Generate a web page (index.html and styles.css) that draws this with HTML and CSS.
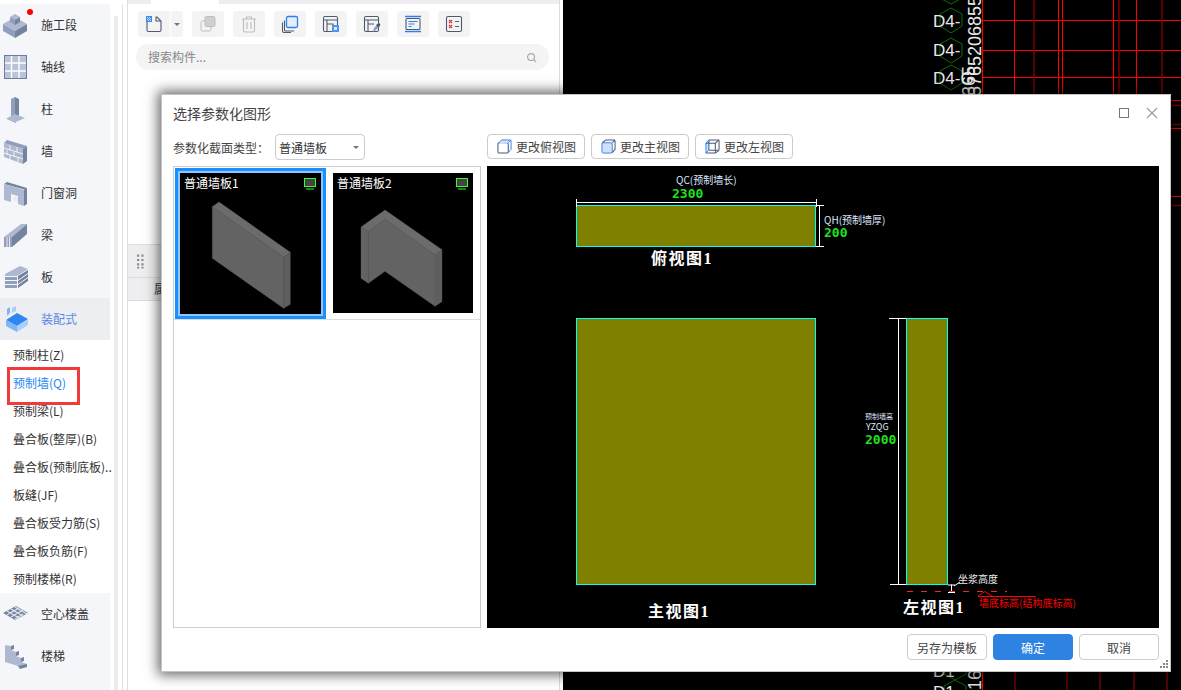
FILE: index.html
```html
<!DOCTYPE html>
<html lang="zh">
<head>
<meta charset="utf-8">
<title>选择参数化图形</title>
<link rel="stylesheet" href="styles.css">
</head>
<body>
<div class="app">
  <aside class="nav">
    <div class="nav-list">
      <div class="nav-item"><svg class="ni" viewBox="0 0 28 28"><polygon class="l" points="2,13 14,6 26,13 14,20"/><polygon class="m" points="2,13 14,20 14,27 2,20"/><polygon class="d" points="14,20 26,13 26,20 14,27"/><polygon class="l" points="9,6 14,3 19,6 14,9"/><polygon class="m" points="9,6 14,9 14,14 9,11"/><polygon class="d" points="14,9 19,6 19,11 14,14"/></svg><span>施工段</span><i class="dot"></i></div>
      <div class="nav-item"><svg class="ni" viewBox="0 0 28 28"><rect x="3.500" y="2.500" width="22" height="23" fill="#b9c3da" stroke="#6f7ca0"/><path d="M10.500 3v22M18 3v22M4 10h21M4 18h21" stroke="#fff" stroke-width="1.400"/></svg><span>轴线</span></div>
      <div class="nav-item"><svg class="ni" viewBox="0 0 28 28"><polygon class="m" points="10,4 14,2 14,22 10,21"/><polygon class="d" points="14,2 18,4 18,21 14,22"/><polygon class="l" points="6,23 14,19 24,23 15,27"/><polygon class="m" points="6,23 15,27 15,28 6,24"/></svg><span>柱</span></div>
      <div class="nav-item"><svg class="ni" viewBox="0 0 28 28"><polygon class="m" points="3,6 6,3 26,9 22,12"/><polygon class="l" points="3,6 22,12 22,27 3,20"/><polygon class="d" points="22,12 26,9 26,24 22,27"/><path d="M3 11l19 6M3 16l19 6M9 8v5M16 10v5M6 13v5M13 15v5M9 18v5M17 20v5" stroke="#fff" stroke-width=".8" fill="none"/></svg><span>墙</span></div>
      <div class="nav-item"><svg class="ni" viewBox="0 0 28 28"><polygon class="d" points="3,5 6,3 26,9 25,11"/><path class="l" d="M3 5l20 6v16l-6-2V17l-7-2v8l-7-2z"/><polygon class="d" points="23,11 26,9 26,25 23,27"/><polygon points="12,17 17,18.500 17,23 12,21" fill="#e8ebf3"/></svg><span>门窗洞</span></div>
      <div class="nav-item"><svg class="ni" viewBox="0 0 28 28"><polygon class="l" points="3,16 20,3 26,3 11,16"/><polygon class="m" points="3,16 11,16 11,26 3,26"/><polygon class="d" points="11,16 26,3 26,13 11,26"/><path d="M6 16v10M8.500 16v10" stroke="#e8ebf3" fill="none"/></svg><span>梁</span></div>
      <div class="nav-item"><svg class="ni" viewBox="0 0 28 28"><polygon class="l" points="4,11 19,3 27,6 16,13 4,13"/><path class="m" d="M4 14h12v3H4zM4 18h12v3H4zM4 22h12v3H4z"/><path class="d" d="M17 13l10-6v3l-10 7zM17 18l10-7v3l-10 7zM17 22l10-7v3l-10 7z"/></svg><span>板</span></div>
      <div class="nav-item active"><svg class="ni" viewBox="0 0 28 28"><polygon points="5,15 16,8 27,14 16,21" fill="#2e86f0"/><polygon points="5,15 16,21 16,27 5,21" fill="#7db6f7"/><polygon points="16,21 27,14 27,20 16,27" fill="#a8cffa"/><polygon points="6,4 9,2 9,8 6,11" fill="#7db6f7"/><polygon points="11,3 15,1 15,6 11,8" fill="#a8cffa"/></svg><span>装配式</span></div>
    </div>
    <ul class="sub-list">
      <li>预制柱(Z)</li>
      <li class="current">预制墙(Q)</li>
      <li>预制梁(L)</li>
      <li>叠合板(整厚)(B)</li>
      <li>叠合板(预制底板)..</li>
      <li>板缝(JF)</li>
      <li>叠合板受力筋(S)</li>
      <li>叠合板负筋(F)</li>
      <li>预制楼梯(R)</li>
    </ul>
    <div class="nav-list">
      <div class="nav-item"><svg class="ni" viewBox="0 0 28 28"><polygon class="d" points="2,13 15,6 27,13 14,20"/><path d="M6 11l12 7M10 9l12 7M14 7l12 7M6 15l12-7M10 17l12-7M14 19l8-5" stroke="#e4e8f2" stroke-width="1.100" fill="none"/></svg><span>空心楼盖</span></div>
      <div class="nav-item"><svg class="ni" viewBox="0 0 28 28"><path class="l" d="M4 3l6 1v4l5 2v4l5 2v4l6 2v3l-9-1L4 20z"/><path class="d" d="M10 4l3-1v4l-3 1zM15 10l3-1v4l-3 1zM20 16l3-1v4l-3 1zM17 24l9-2v3l-7 2z"/></svg><span>楼梯</span></div>
      <div class="nav-item"><svg class="ni" viewBox="0 0 28 28"><polygon class="l" points="8,6 22,6 26,12 12,12"/></svg><span></span></div>
    </div>
  </aside>
  <div class="scroll"><b class="thumb"></b></div>

  <section class="panel">
    <div class="tabs"><span class="tab"></span></div>
    <div class="toolbar">
      <div class="tool split">
        <span class="tool-main"><svg viewBox="0 0 18 18" class="ti"><path d="M2 2v13a1.500 1.500 0 0 0 1.500 1.500h11A1.500 1.500 0 0 0 16 15V6l-4-4h-1v4h5" class="ln"/><rect x="1" y="1" width="6" height="6" fill="#3b86f0"/><path d="M2 2h1v1H2zM4 2h1v1H4zM3 3h1v1H3zM5 3h1v1H5zM2 4h1v1H2zM4 4h1v1H4zM3 5h1v1H3zM5 5h1v1H5z" fill="#cfe2fb"/></svg></span>
        <span class="tool-caret"><i class="caret"></i></span>
      </div>
      <div class="tool"><svg viewBox="0 0 18 18" class="ti"><rect x="6" y="1.500" width="10" height="10" rx="1.500" fill="#cfcfcf" stroke="#bdbdbd"/><path d="M6 6H3.500A1.500 1.500 0 0 0 2 7.500v7A1.500 1.500 0 0 0 3.500 16h7a1.500 1.500 0 0 0 1.500-1.500V12" fill="none" stroke="#bdbdbd"/></svg></div>
      <div class="tool"><svg viewBox="0 0 18 18" class="ti"><path d="M2 4h14M6.500 4V2h5v2M3.500 4v11.500A1.500 1.500 0 0 0 5 17h8a1.500 1.500 0 0 0 1.500-1.500V4M7 7v7M11 7v7" fill="none" stroke="#bdbdbd" stroke-width="1.100"/></svg></div>
      <div class="tool"><svg viewBox="0 0 18 18" class="ti"><rect x="5.500" y="1.500" width="11" height="11" rx="1.500" fill="#e2effd" stroke="#2f80ed" stroke-width="1.300"/><path d="M3.500 5.500v9.500a1 1 0 0 0 1 1H13M1.500 7.500V16a1.500 1.500 0 0 0 1.500 1.500h7" class="ln"/></svg></div>
      <div class="tool"><svg viewBox="0 0 18 18" class="ti"><rect x="1.500" y="1.500" width="14" height="15" rx="1.500" class="ln"/><path d="M1.500 5h14M5 5v11M5 9h6v7" class="ln"/><rect x="10" y="10" width="7" height="7" fill="#4a95f2"/><rect x="12" y="12" width="3" height="3" fill="#d8e9fd"/></svg></div>
      <div class="tool"><svg viewBox="0 0 18 18" class="ti"><rect x="1.500" y="1.500" width="14" height="15" rx="1.500" class="ln"/><path d="M1.500 5h14M5 5v11M5 9h6" class="ln"/><path d="M10 17l1-4 4-4 2 2-4 4z" fill="#8aa0c4"/><path d="M13 10l3-2 1.500 1.500-2 3z" fill="#4b5568"/></svg></div>
      <div class="tool"><svg viewBox="0 0 18 18" class="ti"><path d="M1 1.500h16M1 16.500h16" stroke="#2f80ed" stroke-width="1.300" fill="none"/><rect x="2" y="3.500" width="14" height="11" rx="1" class="ln"/><path d="M4.500 6.500h9M4.500 9h6M4.500 11.500h3" stroke="#2f80ed" fill="none"/></svg></div>
      <div class="tool"><svg viewBox="0 0 18 18" class="ti"><rect x="1.500" y="1.500" width="15" height="15" rx="1.500" class="ln"/><path d="M4 5l3 3M7 5l-3 3M4 10l3 3M7 10l-3 3" stroke="#e23b3b" stroke-width="1.200" fill="none"/><path d="M10 6.500h4M10 11.500h4" class="ln"/></svg></div>
    </div>
    <div class="search"><span>搜索构件...</span><svg viewBox="0 0 12 12" class="search-ico"><circle cx="5.500" cy="5.500" r="3.800" fill="none" stroke="#aaa" stroke-width="1.300"/><path d="M8.500 8.500l2.500 2.500" stroke="#aaa" stroke-width="1.300"/></svg></div>
    <div class="panel-gap"></div>
    <div class="grid-head">
      <span class="grip"><svg viewBox="0 0 8 16" class="grip-ico"><path d="M0 0h2.500v2.500H0zM5 0h2.500v2.500H5zM0 5h2.500v2.500H0zM5 5h2.500v2.500H5zM0 10h2.500v2.500H0zM5 10h2.500v2.500H5zM0 14h2.500v2H0zM5 14h2.500v2H5z" fill="#8c8c8c"/></svg></span>
      <span class="grip-rest"></span>
    </div>
    <div class="grid-cols"><span>属性名称</span></div>
  </section>

  <main class="cad">
    <svg class="cad-svg" viewBox="0 0 618 690">
      <g class="red">
        <path d="M419.500 0V94M451.500 0V94M495.500 0V94M499.500 0V94M550.500 0V94M573.500 0V94"/>
        <path d="M419 20.500H618M419 50.500H618M419 77.500H618"/>
        <path d="M607 100.500H618M607 128.500H618M607 196.500H618M419.500 672V690"/>
      </g>
      <g class="red-dim">
        <path d="M471 0V94M556 0V94M599 0V94"/>
        <path d="M607 105.500H618M607 124.500H618M607 205.500H618"/>
        <path d="M452 672V690M504 672V690M537 672V690M571 672V690M604 672V690"/>
      </g>
      <g class="hex">
        <polygon points="388,-16 399,-10 399,-2 388,4 377,-2 377,-10"/>
        <polygon points="388,8 399,14 399,26 388,33 377,26 377,14"/>
        <polygon points="388,38 399,44 399,56 388,63 377,56 377,44"/>
        <polygon points="388,65 399,71 399,83 388,90 377,83 377,71"/>
        <polygon points="392,656 403,662 403,674 392,680 381,674 381,662"/>
        <polygon points="392,680 403,686 403,698 392,704 381,698 381,686"/>
      </g>
      <text class="cad-t" x="370" y="27">D4-</text>
      <text class="cad-t" x="370" y="56">D4-</text>
      <text class="cad-t" x="370" y="84">D4-G</text>
      <text class="cad-r" transform="translate(418 96) rotate(-90)">5765206855</text>
      <text class="cad-r" transform="translate(412 96) rotate(-90)">365</text>
      <text class="cad-t" x="370" y="677">D1</text>
      <text class="cad-t" x="370" y="698">D1</text>
      <text class="cad-r" transform="translate(418 690) rotate(-90)">16</text>
    </svg>
  </main>
</div>

<div class="dialog">
  <header class="dlg-head">
    <h1>选择参数化图形</h1>
    <div class="win-btns">
      <svg viewBox="0 0 10 10" class="win-ico"><rect x=".5" y=".5" width="9" height="9" fill="none" stroke="#777"/></svg>
      <svg viewBox="0 0 12 12" class="win-ico close"><path d="M1 1l10 10M11 1L1 11" stroke="#999" stroke-width="1.100"/></svg>
    </div>
  </header>
  <div class="dlg-tools">
    <div class="type-field">
      <label>参数化截面类型：</label>
      <div class="select"><span>普通墙板</span><i class="caret"></i></div>
    </div>
    <div class="view-btns">
      <button class="btn view"><svg viewBox="0 0 16 16" class="vi"><rect x="1" y="4" width="11" height="11" rx="1.500" class="ln"/><path d="M1.500 4.500L5 1h10l-3 3z" fill="#cfe2fb"/><path d="M1.500 4.500L5 1h9a1 1 0 0 1 1 1v9l-3 3.500M12 4l3-3" fill="none" stroke="#2f80ed"/></svg>更改俯视图</button>
      <button class="btn view"><svg viewBox="0 0 16 16" class="vi"><rect x="1" y="4" width="11" height="11" rx="1.500" fill="#cfe2fb" stroke="#2f80ed"/><path d="M1.500 4L5 1h9a1 1 0 0 1 1 1v9l-3 3.500M12 4l3-3" class="ln"/></svg>更改主视图</button>
      <button class="btn view"><svg viewBox="0 0 16 16" class="vi"><rect x="4" y="1" width="11" height="11" rx="1" class="ln"/><path d="M1 4.500L4 1v11l-3 3z" fill="#cfe2fb" stroke="#2f80ed"/><path d="M1 15h10l4-3M1 4.500h10l4-3.500M11 4.500V15" class="ln"/></svg>更改左视图</button>
    </div>
  </div>
  <div class="dlg-body">
    <div class="thumbs">
      <div class="thumb-row">
        <div class="tile selected">
          <div class="tile-img">
            <svg viewBox="60 234 420 420" class="tile-svg">
              <polygon class="wf" points="157,335 371,486 371,640 157,490"/>
              <polygon class="ws" points="371,486 391,472 391,628 371,640"/>
              <polygon class="wt" points="157,335 177,321 391,472 371,486"/>
            </svg>
            <span class="tile-name">普通墙板1</span>
            <svg viewBox="0 0 12 12" class="mon"><rect x=".5" y=".5" width="11" height="8" fill="#444" stroke="#3f3"/><path d="M2 11h8" stroke="#3f3"/></svg>
          </div>
        </div>
        <div class="tile">
          <div class="tile-img">
            <svg viewBox="519 234 420 420" class="tile-svg">
              <polygon class="wf" points="625,409 675,373 825,480 825,634 675,529 625,565"/>
              <polygon class="wf" points="603,396 625,409 625,565 603,550"/>
              <polygon class="ws" points="825,480 846,464 846,620 825,634"/>
              <polygon class="wt" points="603,396 675,345 846,464 825,480 675,373 625,409"/>
            </svg>
            <span class="tile-name">普通墙板2</span>
            <svg viewBox="0 0 12 12" class="mon"><rect x=".5" y=".5" width="11" height="8" fill="#444" stroke="#3f3"/><path d="M2 11h8" stroke="#3f3"/></svg>
          </div>
        </div>
      </div>
    </div>
    <div class="preview">
      <svg viewBox="487 166 672 462" class="preview-svg">
        <rect class="olive" x="576.500" y="205.500" width="239" height="41"/>
        <path class="dim" d="M576 202.500H817M576.500 199V207M816.500 199V207M819.500 205V247M816 205.500H824M816 246.500H824"/>
        <text class="t10 blue-white" x="676" y="184">QC(预制墙长)</text>
        <text class="num" x="672" y="198">2300</text>
        <text class="t10 blue-white" x="824" y="224">QH(预制墙厚)</text>
        <text class="num" x="824" y="237">200</text>
        <text class="title" x="651" y="264">俯视图1</text>

        <rect class="olive" x="576.500" y="318.500" width="239" height="266"/>
        <text class="title" x="648" y="617">主视图1</text>

        <rect class="olive" x="906.500" y="318.500" width="41" height="266"/>
        <path class="dim" d="M889 318.500H906M898.500 318V584M890 584.500H906M951.500 584.500V593M948 585H955M948 592.500H955M954 586L960 582"/>
        <text class="t7" x="865" y="419">预制墙高</text>
        <text class="t9" x="866" y="430">YZQG</text>
        <text class="num" x="865" y="444">2000</text>
        <text class="t10" x="958" y="583">坐浆高度</text>
        <text class="title" x="903" y="613">左视图1</text>
        <path class="red-dash" d="M907 591.500H1007"/>
        <path class="red-sol" d="M978 596.500H1036M978 596L985 591.500L992 596"/>
        <text class="t10 red-t" x="979" y="607">墙底标高(结构底标高)</text>
      </svg>
    </div>
  </div>
  <footer class="dlg-foot">
    <button class="btn foot">另存为模板</button>
    <button class="btn foot primary">确定</button>
    <button class="btn foot">取消</button>
    <svg viewBox="0 0 8 8" class="resize"><path d="M6 0h2v2H6zM3 3h2v2H3zM6 3h2v2H6zM0 6h2v2H0zM3 6h2v2H3zM6 6h2v2H6z" fill="#888"/></svg>
  </footer>
</div>
</body>
</html>
```
FILE: styles.css
```css
*, *::before, *::after { box-sizing: border-box; }
html, body { margin: 0; padding: 0; }
body {
  width: 1181px;
  height: 690px;
  overflow: hidden;
  position: relative;
  background: #fff;
  font-family: "Noto Sans CJK SC", "Noto Sans", sans-serif;
  font-size: 12px;
  color: #333;
}
svg { display: block; }
ul { list-style: none; margin: 0; padding: 0; }
button { font-family: inherit; font-size: 12px; }

.app { display: flex; height: 690px; }

/* left navigation */
.nav { width: 110px; flex: none; padding-top: 4px; height: 690px; }
.nav-list { background: #f5f6fa; }
.nav-item {
  height: 42px;
  display: flex;
  align-items: center;
  gap: 12px;
  padding-left: 1px;
  position: relative;
  font-size: 12px;
  color: #333;
}
.nav-item span { margin-top: -1px; }
.nav-item.active { background: #edeef2; color: #5b8ae6; }
.ni { width: 28px; height: 28px; flex: none; }
.l { fill: #aeb8d1; }
.m { fill: #929ebd; }
.d { fill: #76839f; }
.dot {
  position: absolute;
  left: 27px;
  top: 5px;
  width: 6px;
  height: 6px;
  border-radius: 50%;
  background: #f00;
}
.sub-list { padding-top: 1px; }
.sub-list li { height: 28px; line-height: 28px; padding-left: 13px; white-space: nowrap; color: #333; position: relative; }
.sub-list .current { color: #1e88f0; }
.sub-list .current::after {
  content: "";
  position: absolute;
  left: 7px;
  top: -2px;
  width: 73px;
  height: 38px;
  border: 3px solid #f23a3a;
}

.scroll {
  width: 13px;
  flex: none;
  padding: 12px 0 0 4px;
  border-right: 1px solid #e2e2e2;
  height: 686px;
  margin-top: 4px;
}
.thumb { display: block; width: 4px; height: 100%; background: #ececec; }

/* component panel */
.panel {
  width: 436px;
  flex: none;
  margin-left: 4px;
  height: 690px;
  display: flex;
  flex-direction: column;
  border-left: 1px solid #ddd;
  border-right: 4px solid #fff;
  position: relative;
}
.panel::after {
  content: "";
  position: absolute;
  right: -1px;
  top: 0;
  bottom: 0;
  width: 1px;
  background: #ddd;
}
.tabs { height: 4px; background: #eeeef0; flex: none; padding-left: 23px; }
.tab { display: block; width: 68px; height: 4px; background: #fff; }
.toolbar { display: flex; gap: 9px; padding: 7px 0 0 10px; flex: none; height: 33px; }
.tool {
  width: 32px;
  height: 26px;
  border-radius: 3px;
  background: #f4f4f5;
  display: flex;
  align-items: center;
  justify-content: center;
}
.tool.split { width: 45px; background: none; gap: 1px; }
.tool-main, .tool-caret {
  height: 26px;
  background: #f4f4f5;
  display: flex;
  align-items: center;
  justify-content: center;
}
.tool-main { width: 32px; border-radius: 3px 0 0 3px; }
.tool-caret { width: 12px; border-radius: 0 3px 3px 0; }
.ti { width: 18px; height: 18px; }
.ln { fill: none; stroke: #4f5a70; stroke-width: 1.1; }
.caret {
  display: block;
  width: 0;
  height: 0;
  border-left: 3px solid transparent;
  border-right: 3px solid transparent;
  border-top: 3px solid #777;
}
.search {
  margin: 7px 10px 0 8px;
  height: 26px;
  border-radius: 13px;
  background: #f4f4f5;
  display: flex;
  align-items: center;
  justify-content: space-between;
  padding: 0 12px;
  color: #888;
  flex: none;
}
.search span { margin-top: -2px; }
.search-ico { width: 11px; height: 11px; }
.panel-gap { flex: none; height: 174px; }
.grid-head {
  height: 33px;
  flex: none;
  display: flex;
  border-top: 1px solid #ddd;
  background: #eeeef0;
}
.grip { width: 24px; display: flex; align-items: center; justify-content: center; }
.grip-ico { width: 7px; height: 15px; }
.grip-rest { flex: 1; background: #f4f4f5; }
.grid-cols {
  height: 24px;
  flex: none;
  background: #eeeef0;
  border-top: 1px solid #ddd;
  border-bottom: 1px solid #ddd;
  padding-left: 26px;
  line-height: 22px;
  white-space: nowrap;
}

/* CAD background */
.cad { flex: 1; height: 690px; background: #000; overflow: hidden; }
.cad-svg { width: 618px; height: 690px; }
.red path { stroke: #f00; stroke-width: 1; fill: none; }
.red-dim path { stroke: #7a0000; stroke-width: 1.5; fill: none; }
.hex polygon { fill: none; stroke: #0a6e0a; stroke-width: 1; }
.cad-t { fill: #e8e8e8; font-family: "Liberation Sans", sans-serif; font-size: 17px; }
.cad-r { fill: #e8e8e8; font-family: "Liberation Sans", sans-serif; font-size: 18px; }

/* dialog */
.dialog {
  position: absolute;
  left: 161px;
  top: 94px;
  width: 1010px;
  height: 578px;
  background: #fff;
  border: 1px solid #c4c4c4;
  box-shadow: 0 0 12px 3px rgba(0, 0, 0, .6);
  display: flex;
  flex-direction: column;
  padding: 0 11px 0 11px;
}
.dlg-head {
  height: 39px;
  flex: none;
  display: flex;
  align-items: center;
  justify-content: space-between;
  padding-bottom: 3px;
}
.dlg-head h1 { margin: 0; font-size: 14px; font-weight: 400; color: #444; }
.win-btns { display: flex; align-items: center; gap: 17px; padding-right: 1px; }
.win-ico { width: 10px; height: 10px; }
.win-ico.close { width: 12px; height: 12px; }
.dlg-tools { height: 32px; flex: none; display: flex; align-items: flex-start; }
.type-field { width: 314px; display: flex; align-items: center; height: 26px; flex: none; }
.type-field label { width: 102px; color: #444; flex: none; }
.select {
  width: 90px;
  height: 26px;
  border: 1px solid #ccc;
  border-radius: 4px;
  display: flex;
  align-items: center;
  justify-content: space-between;
  padding: 0 5px 0 3px;
}
.view-btns { display: flex; gap: 6px; }
.btn {
  border: 1px solid #ccc;
  border-radius: 4px;
  background: #fff;
  color: #444;
  padding: 0;
}
.btn.view {
  width: 98px;
  height: 25px;
  display: flex;
  align-items: center;
  gap: 4px;
  padding-left: 9px;
}
.vi { width: 15px; height: 15px; flex: none; }
.dlg-body { height: 462px; flex: none; display: flex; gap: 6px; }
.thumbs { width: 308px; flex: none; border: 1px solid #ccc; }
.thumb-row { display: flex; border-bottom: 1px solid #ddd; padding: 1px 7px 0 1px; }
.tile { width: 151px; height: 151px; flex: none; padding: 5px 0 6px 7px; }
.tile.selected { padding: 2px; border: 3px solid #1a90ff; background: #90c5ff; }
.tile-img { position: relative; width: 140px; height: 140px; background: #000; }
.tile.selected .tile-img { width: 141px; height: 141px; }
.tile-svg { width: 140px; height: 140px; }
.tile-name { position: absolute; left: 4px; top: 1px; color: #fff; font-size: 12px; white-space: nowrap; }
.mon { position: absolute; right: 5px; top: 5px; width: 12px; height: 12px; }
.wt { fill: #6b6b6b; stroke: #6b6b6b; stroke-width: 1; }
.wf { fill: #636363; stroke: #636363; stroke-width: 1; }
.ws { fill: #5e5e5e; stroke: #5e5e5e; stroke-width: 1; }
.preview { width: 672px; flex: none; background: #000; }
.preview-svg { width: 672px; height: 462px; }
.olive { fill: #808000; stroke: #0ff; stroke-width: 1; }
.dim { fill: none; stroke: #fff; stroke-width: 1; }
.t9 { fill: #dfe8ff; font-size: 9px; font-family: "Noto Sans CJK SC", sans-serif; }
.t7 { fill: #dfe8ff; font-size: 7px; font-family: "Noto Sans CJK SC", sans-serif; }
.t10 { fill: #eee; font-size: 10px; font-family: "Noto Sans CJK SC", sans-serif; }
.blue-white { fill: #dfe8ff; }
.red-t { fill: #f00; }
.num { fill: #1fe01f; font-size: 13px; font-weight: 700; font-family: "DejaVu Sans Mono", monospace; }
.title { fill: #fff; font-size: 16px; font-weight: 700; letter-spacing: 1.5px; font-family: "Liberation Serif", "Noto Sans CJK SC", serif; }
.red-dash { fill: none; stroke: #f22; stroke-dasharray: 6 8; }
.red-sol { fill: none; stroke: #f00; }
.dlg-foot {
  height: 43px;
  flex: none;
  display: flex;
  justify-content: flex-end;
  gap: 6px;
  padding-top: 6px;
  position: relative;
}
.btn.foot { width: 80px; height: 26px; }
.btn.primary { background: #2d82e2; border-color: #2d82e2; color: #fff; }
.resize { position: absolute; right: -9px; bottom: 3px; width: 8px; height: 8px; }
```
